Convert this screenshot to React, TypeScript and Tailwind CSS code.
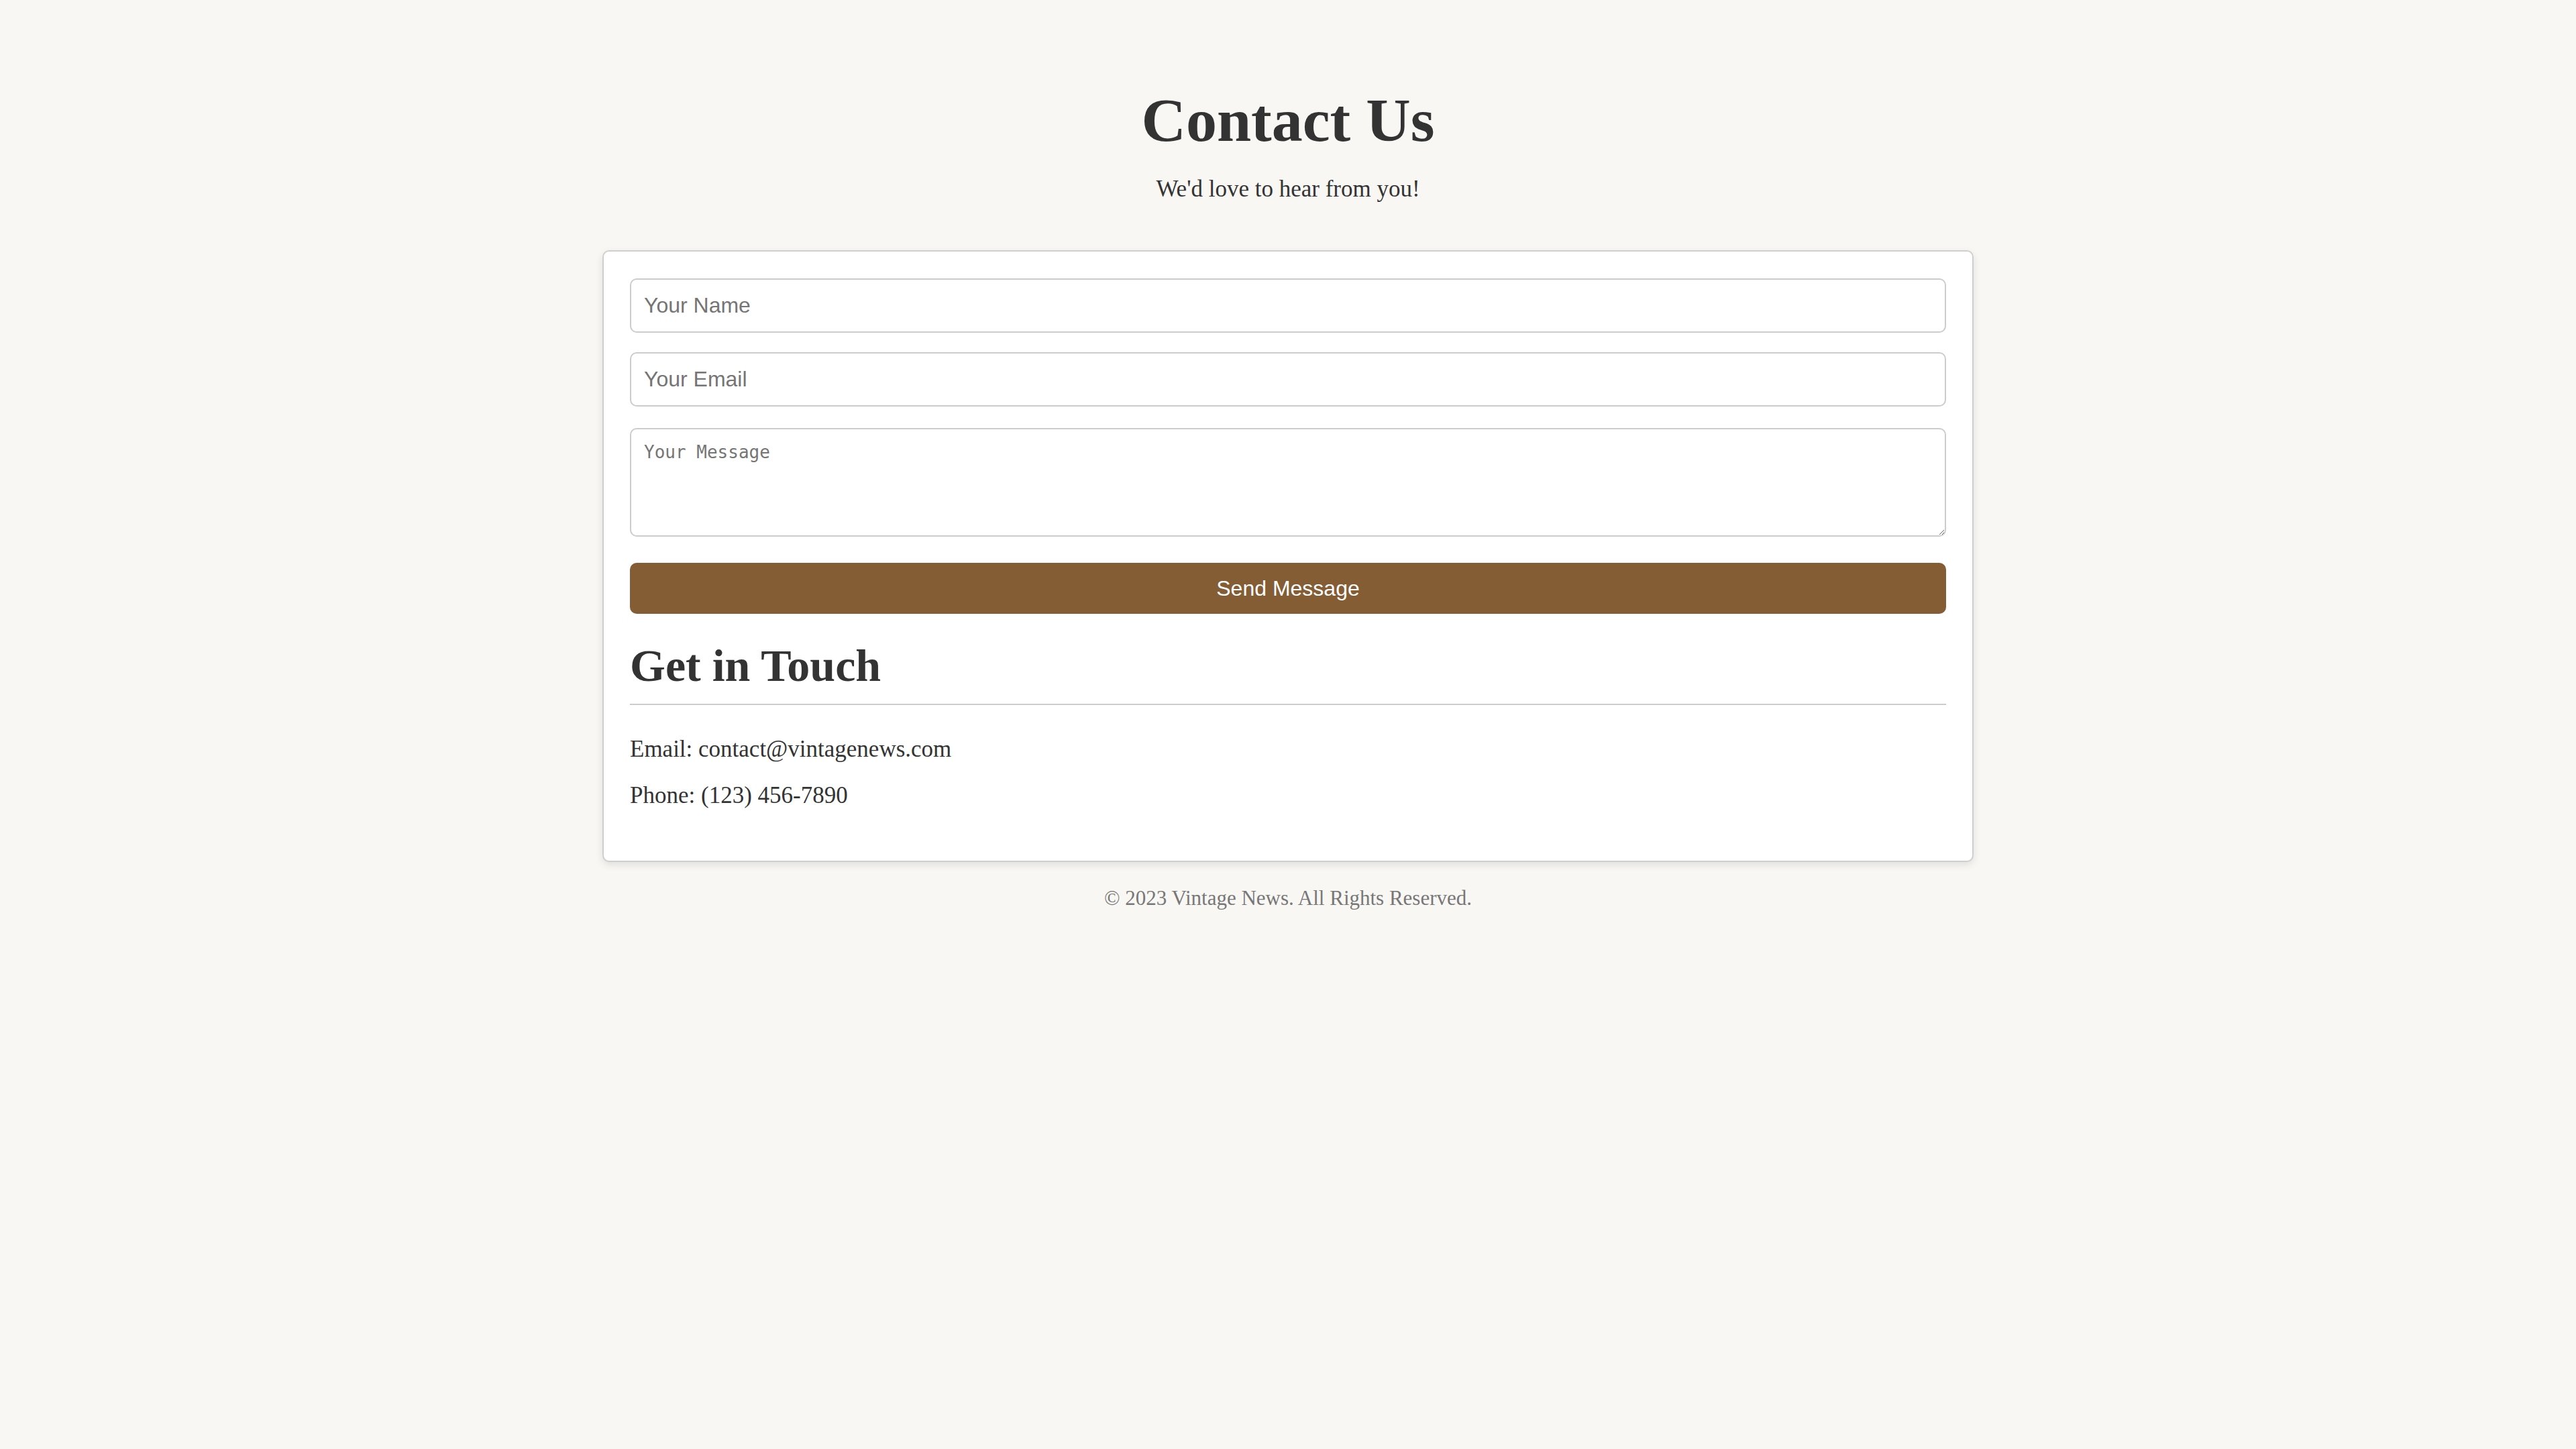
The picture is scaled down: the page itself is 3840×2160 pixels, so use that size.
import { useState } from 'react';

export default function App(){
  const [name, setName] = useState('');
  const [email, setEmail] = useState('');
  const [msg, setMsg] = useState('');

  return (
    <div className="min-h-screen bg-[#f8f7f4] text-[#333] font-['Liberation_Serif',Georgia,serif]">
      <div className="pt-[126px] text-center">
        <h1 className="text-[92px] leading-[106px] font-bold">Contact Us</h1>
        <p className="mt-[30px] text-[35px] leading-[40px]">We'd love to hear from you!</p>
      </div>

      <main className="w-[2044px] mx-auto mt-[71px] bg-white border-2 border-[#cfcfcf] rounded-[10px] shadow-[0_4px_12px_rgba(0,0,0,0.1)] px-[39px] pt-[40px] pb-[40px]">
        <form onSubmit={e=>e.preventDefault()} className="flex flex-col">
          <input
            className="h-[81px] border-2 border-[#cccccc] rounded-[10px] px-[19px] text-[32px] font-['Liberation_Sans',Arial,sans-serif] placeholder:text-[#757575] outline-none mb-[29px]"
            placeholder="Your Name" value={name} onChange={e=>setName(e.target.value)} />
          <input
            className="h-[81px] border-2 border-[#cccccc] rounded-[10px] px-[19px] text-[32px] font-['Liberation_Sans',Arial,sans-serif] placeholder:text-[#757575] outline-none mb-[32px]"
            placeholder="Your Email" value={email} onChange={e=>setEmail(e.target.value)} />
          <textarea
            className="h-[162px] border-2 border-[#cccccc] rounded-[10px] px-[19px] py-[18px] text-[26px] leading-[32px] font-['DejaVu_Sans_Mono','Liberation_Mono',monospace] placeholder:text-[#757575] outline-none mb-[39px]"
            placeholder="Your Message" value={msg} onChange={e=>setMsg(e.target.value)} />
          <button type="submit" className="h-[76px] rounded-[10px] bg-[#845d34] text-white text-[32px] font-['Liberation_Sans',Arial,sans-serif]">
            Send Message
          </button>
        </form>

        <section className="mt-[39px]">
          <h2 className="text-[68px] leading-[76px] font-bold pb-[19px] border-b-2 border-[#cccccc]">Get in Touch</h2>
          <p className="mt-[48px] text-[35px] leading-[36px]">Email: contact@vintagenews.com</p>
          <p className="mt-[33px] mb-[39px] text-[35px] leading-[36px]">Phone: (123) 456-7890</p>
        </section>
      </main>

      <footer className="mt-[36px] text-center text-[31px] leading-[36px] text-[#777]">
        © 2023 Vintage News. All Rights Reserved.
      </footer>
    </div>
  );
}
